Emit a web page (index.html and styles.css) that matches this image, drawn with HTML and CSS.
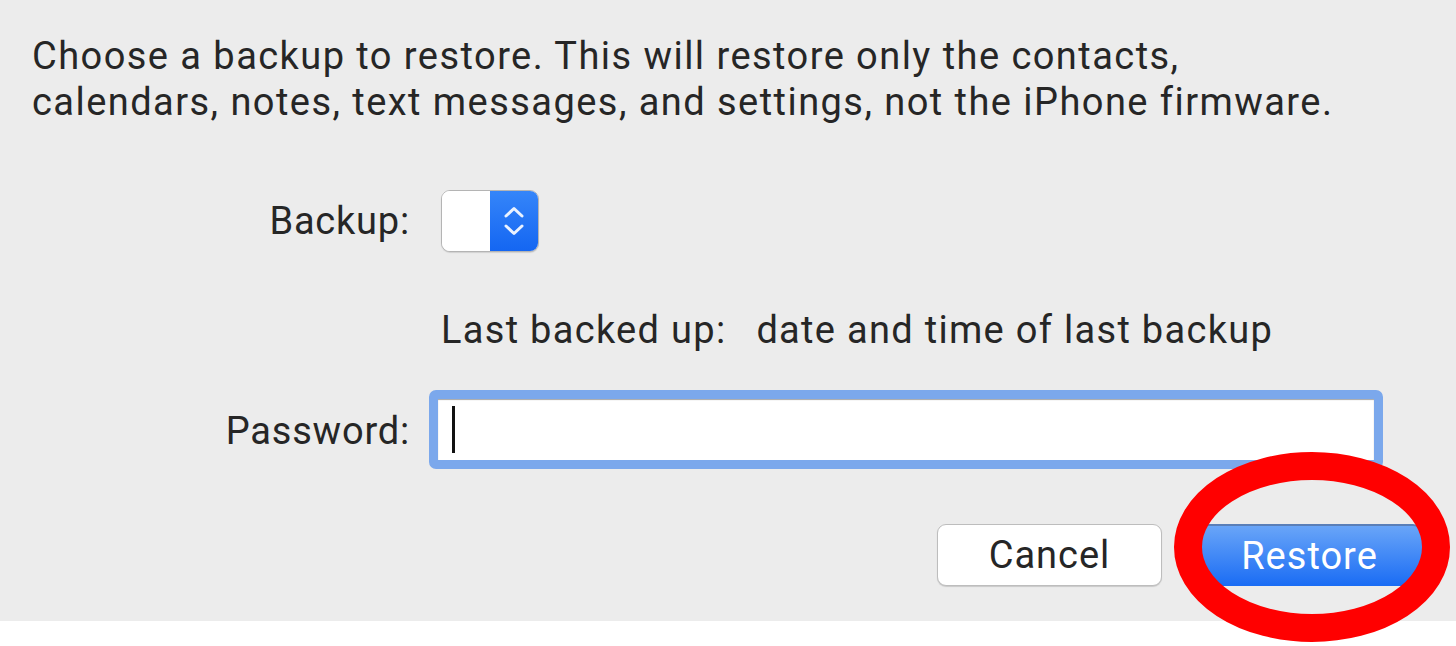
FILE: index.html
```html
<!DOCTYPE html>
<html lang="en">
<head>
<meta charset="utf-8">
<title>Restore from Backup</title>
<link rel="stylesheet" href="styles.css">
</head>
<body>
<div class="dialog">
  <p class="intro">Choose a backup to restore. This will restore only the contacts,<br>calendars, notes, text messages, and settings, not the iPhone firmware.</p>
  <div class="form">
    <div class="label row-backup">Backup:</div>
    <div class="field row-backup">
      <div class="popup">
        <span class="popup-value"></span>
        <span class="popup-arrows">
          <svg width="24" height="40" viewBox="0 0 24 40" aria-hidden="true">
            <path d="M4 15 L12 7.5 L20 15" fill="none" stroke="#eaf2ff" stroke-width="3" stroke-linecap="round" stroke-linejoin="round"/>
            <path d="M4 25 L12 32.5 L20 25" fill="none" stroke="#eaf2ff" stroke-width="3" stroke-linecap="round" stroke-linejoin="round"/>
          </svg>
        </span>
      </div>
    </div>
    <div class="label row-last"></div>
    <div class="field row-last last-backed">
      <span>Last backed up:</span>
      <span>date and time of last backup</span>
    </div>
    <div class="label row-pass">Password:</div>
    <div class="field row-pass">
      <div class="password"><span class="caret"></span></div>
    </div>
  </div>
  <div class="buttons">
    <button class="btn btn-cancel">Cancel</button>
    <button class="btn btn-restore">Restore</button>
  </div>
  <svg class="highlight" width="300" height="200" viewBox="0 0 300 200" aria-hidden="true">
    <ellipse cx="150" cy="96" rx="124" ry="81" fill="none" stroke="#ff0000" stroke-width="28"/>
  </svg>
</div>
<div class="below"></div>
</body>
</html>
```

FILE: styles.css
```css
html, body {
  margin: 0;
  padding: 0;
  background: #ffffff;
}

body {
  font-family: Roboto, "Liberation Sans", sans-serif;
  color: #262626;
  width: 1456px;
  height: 646px;
  overflow: hidden;
}

.dialog {
  position: relative;
  height: 621px;
  background: #ececec;
  display: flex;
  flex-direction: column;
  box-sizing: border-box;
  padding-top: 33px;
}

.intro {
  margin: 0;
  padding-left: 32px;
  font-size: 38px;
  line-height: 46px;
  letter-spacing: 1.45px;
  color: #262626;
}

.form {
  display: grid;
  grid-template-columns: 410px 1fr;
  column-gap: 31px;
  margin-top: 65px;
  font-size: 38px;
  letter-spacing: 0.8px;
}

.label {
  text-align: right;
  color: #262626;
}

.row-backup.label { line-height: 62px; }

.popup {
  width: 98px;
  height: 62px;
  box-sizing: border-box;
  border: 1.5px solid #b4b4b4;
  border-radius: 9px;
  display: flex;
  overflow: hidden;
  background: #ffffff;
  box-shadow: 0 1px 1px rgba(0,0,0,0.12);
}

.popup-value {
  flex: 1;
  background: #ffffff;
}

.popup-arrows {
  width: 48px;
  background: linear-gradient(#3585f9, #1466f2);
  display: flex;
  align-items: center;
  justify-content: center;
}

.row-last {
  margin-top: 58px;
  line-height: 40px;
}

.last-backed {
  display: flex;
  gap: 30px;
  letter-spacing: 1.3px;
  color: #262626;
}

.row-pass {
  margin-top: 40px;
}

.row-pass.label {
  line-height: 79px;
  padding-top: 2px;
}

.row-pass.field {
  margin-left: -12px;
}

.password {
  box-sizing: border-box;
  width: 954px;
  height: 79px;
  border: 9px solid #7ba8ec;
  border-radius: 7px;
  background: #ffffff;
  box-shadow: inset 0 1px 1px rgba(0,0,0,0.35);
  display: flex;
  align-items: center;
  padding-left: 14px;
}

.caret {
  width: 2.5px;
  height: 47px;
  background: #111111;
}

.buttons {
  display: flex;
  justify-content: flex-end;
  gap: 35px;
  padding-right: 34px;
  margin-top: 53px;
}

.btn {
  width: 225px;
  height: 62px;
  border-radius: 9px;
  font-family: Roboto, "Liberation Sans", sans-serif;
  font-size: 38px;
  letter-spacing: 1px;
  padding: 0;
  cursor: default;
}

.btn-cancel {
  background: #ffffff;
  border: 1.5px solid #bdbdbd;
  color: #262626;
  box-shadow: 0 1px 1px rgba(0,0,0,0.15);
}

.btn-restore {
  background: linear-gradient(#69a5f8, #1a6cf4);
  border: none;
  border-top: 2px solid #5a7fb8;
  color: #ffffff;
}

.highlight {
  position: absolute;
  left: 1162px;
  top: 451px;
}

.below {
  height: 25px;
  background: #ffffff;
}
```
